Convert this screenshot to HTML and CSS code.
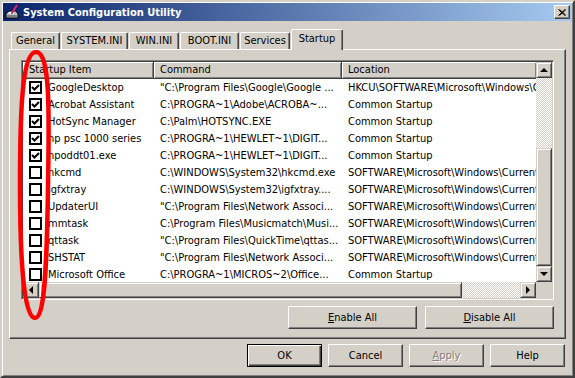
FILE: index.html
```html
<!DOCTYPE html>
<html lang="en">
<head>
    <meta charset="UTF-8">
    <title>System Configuration Utility</title>
    <link rel="stylesheet" href="styles.css">
</head>
<body>
    <div class="window">
        <div class="titlebar">
            <svg class="title-icon" width="16" height="16" viewBox="0 0 16 16">
                <path d="M2 10 L5 7 L12 7 L14 10 L14 14 L2 14 Z" fill="#c0c0c0" stroke="#000" stroke-width="1"/>
                <rect x="3" y="11" width="10" height="2" fill="#808080"/>
                <rect x="5" y="8" width="5" height="2" fill="#fff"/>
                <path d="M8 9 L13 1" stroke="#e0207a" stroke-width="2"/>
                <path d="M7.5 10 L8.5 8.5" stroke="#000" stroke-width="1"/>
            </svg>
            <span class="title-text">System Configuration Utility</span>
            <div class="close-btn">
                <svg width="8" height="7" viewBox="0 0 8 7">
                    <path d="M0.5 0.5 L7 6.5 M1.5 0.5 L8 6.5 M7 0.5 L0.5 6.5 M8 0.5 L1.5 6.5" stroke="#000" stroke-width="1"/>
                </svg>
            </div>
        </div>

        <div class="dialog-body">
            <div class="tabs">
                <div class="tab tab-general">General</div>
                <div class="tab tab-system">SYSTEM.INI</div>
                <div class="tab tab-win">WIN.INI</div>
                <div class="tab tab-boot">BOOT.INI</div>
                <div class="tab tab-services">Services</div>
                <div class="tab tab-startup active">Startup</div>
            </div>

            <div class="panel">
                <div class="listview">
                    <div class="list-main">
                        <div class="list-header">
                            <div class="col col-item">Startup Item</div>
                            <div class="col col-command">Command</div>
                            <div class="col col-location">Location</div>
                        </div>

                        <div class="row">
                            <div class="col col-item"><span class="chk"><svg width="9" height="9" viewBox="0 0 9 9"><path d="M1 4 L3.5 6.5 L8 2" fill="none" stroke="#000" stroke-width="2"/></svg></span>GoogleDesktop</div>
                            <div class="col col-command">"C:\Program Files\Google\Google ...</div>
                            <div class="col col-location">HKCU\SOFTWARE\Microsoft\Windows\CurrentVersion\Run</div>
                        </div>
                        <div class="row">
                            <div class="col col-item"><span class="chk"><svg width="9" height="9" viewBox="0 0 9 9"><path d="M1 4 L3.5 6.5 L8 2" fill="none" stroke="#000" stroke-width="2"/></svg></span>Acrobat Assistant</div>
                            <div class="col col-command">C:\PROGRA~1\Adobe\ACROBA~...</div>
                            <div class="col col-location">Common Startup</div>
                        </div>
                        <div class="row">
                            <div class="col col-item"><span class="chk"><svg width="9" height="9" viewBox="0 0 9 9"><path d="M1 4 L3.5 6.5 L8 2" fill="none" stroke="#000" stroke-width="2"/></svg></span>HotSync Manager</div>
                            <div class="col col-command">C:\Palm\HOTSYNC.EXE</div>
                            <div class="col col-location">Common Startup</div>
                        </div>
                        <div class="row">
                            <div class="col col-item"><span class="chk"><svg width="9" height="9" viewBox="0 0 9 9"><path d="M1 4 L3.5 6.5 L8 2" fill="none" stroke="#000" stroke-width="2"/></svg></span>hp psc 1000 series</div>
                            <div class="col col-command">C:\PROGRA~1\HEWLET~1\DIGIT...</div>
                            <div class="col col-location">Common Startup</div>
                        </div>
                        <div class="row">
                            <div class="col col-item"><span class="chk"><svg width="9" height="9" viewBox="0 0 9 9"><path d="M1 4 L3.5 6.5 L8 2" fill="none" stroke="#000" stroke-width="2"/></svg></span>hpoddt01.exe</div>
                            <div class="col col-command">C:\PROGRA~1\HEWLET~1\DIGIT...</div>
                            <div class="col col-location">Common Startup</div>
                        </div>
                        <div class="row">
                            <div class="col col-item"><span class="chk"></span>hkcmd</div>
                            <div class="col col-command">C:\WINDOWS\System32\hkcmd.exe</div>
                            <div class="col col-location">SOFTWARE\Microsoft\Windows\CurrentVersion\Run</div>
                        </div>
                        <div class="row">
                            <div class="col col-item"><span class="chk"></span>igfxtray</div>
                            <div class="col col-command">C:\WINDOWS\System32\igfxtray....</div>
                            <div class="col col-location">SOFTWARE\Microsoft\Windows\CurrentVersion\Run</div>
                        </div>
                        <div class="row">
                            <div class="col col-item"><span class="chk"></span>UpdaterUI</div>
                            <div class="col col-command">"C:\Program Files\Network Associ...</div>
                            <div class="col col-location">SOFTWARE\Microsoft\Windows\CurrentVersion\Run</div>
                        </div>
                        <div class="row">
                            <div class="col col-item"><span class="chk"></span>mmtask</div>
                            <div class="col col-command">C:\Program Files\Musicmatch\Musi...</div>
                            <div class="col col-location">SOFTWARE\Microsoft\Windows\CurrentVersion\Run</div>
                        </div>
                        <div class="row">
                            <div class="col col-item"><span class="chk"></span>qttask</div>
                            <div class="col col-command">"C:\Program Files\QuickTime\qttas...</div>
                            <div class="col col-location">SOFTWARE\Microsoft\Windows\CurrentVersion\Run</div>
                        </div>
                        <div class="row">
                            <div class="col col-item"><span class="chk"></span>SHSTAT</div>
                            <div class="col col-command">"C:\Program Files\Network Associ...</div>
                            <div class="col col-location">SOFTWARE\Microsoft\Windows\CurrentVersion\Run</div>
                        </div>
                        <div class="row">
                            <div class="col col-item"><span class="chk"></span>Microsoft Office</div>
                            <div class="col col-command">C:\PROGRA~1\MICROS~2\Office...</div>
                            <div class="col col-location">Common Startup</div>
                        </div>
                    </div>

                    <div class="vscroll">
                        <div class="sb-btn"><span class="arrow-up"></span></div>
                        <div class="sb-track sb-track-top"></div>
                        <div class="sb-thumb sb-thumb-v"></div>
                        <div class="sb-btn"><span class="arrow-down"></span></div>
                    </div>
                    <div class="hscroll">
                        <div class="sb-btn"><span class="arrow-left"></span></div>
                        <div class="sb-thumb sb-thumb-h"></div>
                        <div class="sb-track sb-track-right"></div>
                        <div class="sb-btn"><span class="arrow-right"></span></div>
                    </div>
                    <div class="sb-corner"></div>
                </div>

                <div class="panel-buttons">
                    <div class="btn btn-wide"><u>E</u>nable All</div>
                    <div class="btn btn-wide"><u>D</u>isable All</div>
                </div>
            </div>

            <div class="dialog-buttons">
                <div class="btn btn-default">OK</div>
                <div class="btn">Cancel</div>
                <div class="btn disabled"><u>A</u>pply</div>
                <div class="btn">Help</div>
            </div>
        </div>

        <!-- red marker drawn over the checkbox column -->
        <svg class="marker" width="575" height="378" viewBox="0 0 575 378">
            <path d="M36 52 C51 52 49 120 48 185 C47 262 45 318 35 318 C24 318 20 262 20 185 C20 112 22 52 36 52 Z" fill="none" stroke="#ff0000" stroke-width="4.5"/>
        </svg>
    </div>
</body>
</html>
```

FILE: styles.css
```css
* {
    margin: 0;
    padding: 0;
    box-sizing: border-box;
}

body {
    background: #d4d0c8;
    font-family: "DejaVu Sans Condensed", "DejaVu Sans", "Liberation Sans", sans-serif;
    font-stretch: condensed;
    font-size: 11px;
    color: #000;
}

.window {
    position: relative;
    width: 575px;
    height: 378px;
    padding: 1px;
    background: #d4d0c8;
    border: 2px solid;
    border-color: #d4d0c8 #404040 #404040 #d4d0c8;
    box-shadow: inset 1px 1px #fff, inset -1px -1px #808080;
    display: flex;
    flex-direction: column;
    overflow: hidden;
}

/* Title bar */
.titlebar {
    height: 18px;
    display: flex;
    align-items: center;
    padding: 0 2px 0 1px;
    background: linear-gradient(to right, #0a246a, #a6caf0);
}

.title-icon {
    margin-right: 3px;
}

.title-text {
    color: #fff;
    font-weight: bold;
    font-size: 11px;
}

.close-btn {
    margin-left: auto;
    width: 16px;
    height: 14px;
    display: flex;
    align-items: center;
    justify-content: center;
    border: 1px solid;
    border-color: #fff #404040 #404040 #fff;
    box-shadow: inset -1px -1px #808080;
    background: #d4d0c8;
}

/* Dialog body */
.dialog-body {
    flex: 1;
    padding: 8px 6px 0 6px;
}

.tabs {
    display: flex;
    align-items: flex-end;
    height: 20px;
    padding-left: 2px;
}

.tab {
    height: 17px;
    margin-right: 1px;
    text-align: center;
    line-height: 15px;
    background: #d4d0c8;
    border-top: 1px solid #fff;
    border-left: 1px solid #fff;
    border-right: 1px solid #404040;
    border-radius: 2px 2px 0 0;
    box-shadow: inset -1px 0 #808080;
}

.tab-general { width: 49px; }
.tab-system { width: 67px; }
.tab-win { width: 50px; }
.tab-boot { width: 59px; }
.tab-services { width: 50px; }
.tab-startup { width: 52px; }

.tab.active {
    position: relative;
    z-index: 1;
    height: 21px;
    margin-bottom: -1px;
    line-height: 18px;
}

.panel {
    border: 1px solid;
    border-color: #fff #404040 #404040 #fff;
    box-shadow: inset -1px -1px #808080;
    padding: 10px 0 9px 11px;
}

/* List view */
.listview {
    width: 533px;
    height: 240px;
    border: 1px solid;
    border-color: #808080 #fff #fff #808080;
    box-shadow: inset 1px 1px #404040, inset -1px -1px #d4d0c8;
    padding: 1px;
    display: grid;
    grid-template-columns: 1fr 16px;
    grid-template-rows: 1fr 16px;
    background: #fff;
}

.list-main {
    overflow: hidden;
    background: #fff;
}

.list-header,
.row {
    display: flex;
    white-space: nowrap;
}

.list-header {
    height: 17px;
    background: #d4d0c8;
}

.list-header .col {
    line-height: 15px;
    padding-left: 6px;
    border-right: 1px solid #404040;
    border-bottom: 1px solid #404040;
    box-shadow: inset 1px 1px #fff, inset -1px -1px #808080;
}

.col {
    overflow: hidden;
    flex-shrink: 0;
}

.col-item { width: 131px; }
.col-command { width: 188px; }
.col-location { flex: 1; }

.list-header .col-location {
    border-right: none;
}

.row {
    height: 17px;
    line-height: 17px;
}

.row .col {
    padding-left: 6px;
}

.row .col-item {
    display: flex;
    align-items: center;
}

.chk {
    width: 13px;
    height: 13px;
    margin-right: 6px;
    flex-shrink: 0;
    border: 2px solid #000;
    background: #fff;
    display: flex;
    align-items: center;
    justify-content: center;
}

/* Scroll bars */
.vscroll {
    display: flex;
    flex-direction: column;
}

.hscroll {
    display: flex;
}

.sb-btn,
.sb-thumb {
    background: #d4d0c8;
    border: 1px solid;
    border-color: #d4d0c8 #404040 #404040 #d4d0c8;
    box-shadow: inset 1px 1px #fff, inset -1px -1px #808080;
}

.sb-btn {
    width: 16px;
    height: 16px;
    flex-shrink: 0;
    display: flex;
    align-items: center;
    justify-content: center;
}

.sb-track {
    background: conic-gradient(#d4d0c8 25%, #fff 0 50%, #d4d0c8 0 75%, #fff 0) 0 0 / 2px 2px;
}

.sb-track-top { height: 70px; }
.sb-thumb-v { height: 118px; }
.sb-thumb-h { width: 423px; }
.sb-track-right { width: 58px; }

.sb-corner {
    background: #d4d0c8;
}

.arrow-up,
.arrow-down,
.arrow-left,
.arrow-right {
    width: 0;
    height: 0;
    border: 4px solid transparent;
}

.arrow-up {
    border-top: 0;
    border-bottom-color: #000;
}

.arrow-down {
    border-bottom: 0;
    border-top-color: #000;
}

.arrow-left {
    border-left: 0;
    border-right-color: #000;
}

.arrow-right {
    border-right: 0;
    border-left-color: #000;
}

/* Buttons */
.panel-buttons {
    width: 533px;
    margin-top: 6px;
    display: flex;
    justify-content: flex-end;
    gap: 8px;
}

.btn {
    width: 75px;
    height: 23px;
    display: flex;
    align-items: center;
    justify-content: center;
    background: #d4d0c8;
    border: 1px solid;
    border-color: #fff #404040 #404040 #fff;
    box-shadow: inset -1px -1px #808080;
}

.btn-wide {
    width: 129px;
}

.btn-default {
    border: 1px solid #000;
    box-shadow: inset 1px 1px #fff, inset -1px -1px #404040, inset -2px -2px #808080;
}

.btn.disabled {
    color: #808080;
    text-shadow: 1px 1px #fff;
}

.dialog-buttons {
    margin-top: 5px;
    padding-right: 1px;
    display: flex;
    justify-content: flex-end;
    gap: 6px;
}

.marker {
    position: absolute;
    top: -2px;
    left: -2px;
    pointer-events: none;
}
```
